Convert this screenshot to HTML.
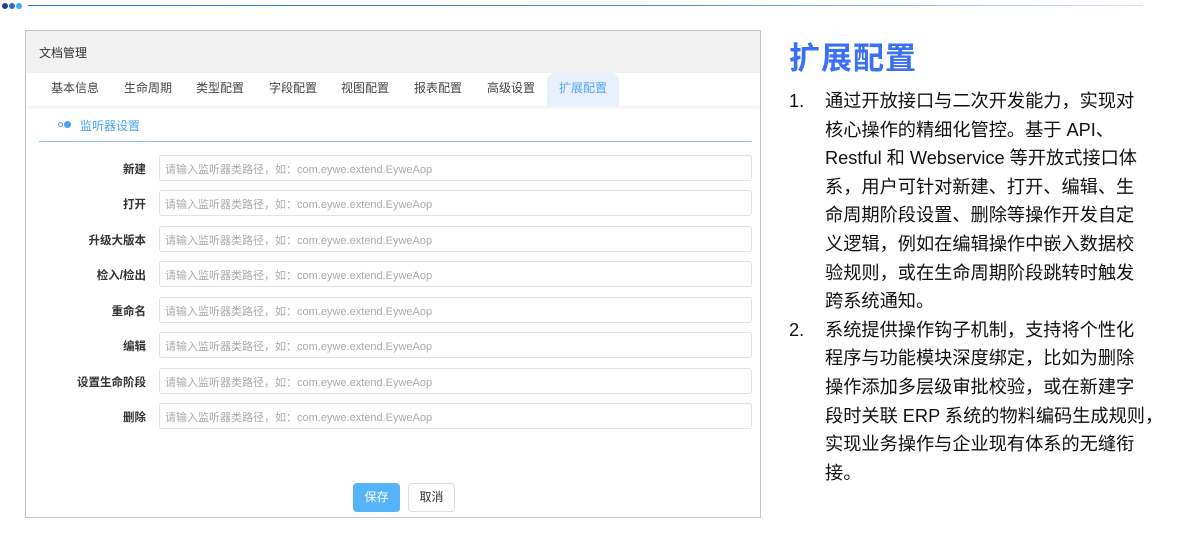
<!DOCTYPE html>
<html><head><meta charset="utf-8"><style>
*{margin:0;padding:0;box-sizing:border-box}
body{width:1188px;height:535px;background:#fff;position:relative;overflow:hidden;font-family:"Liberation Sans","Noto Sans CJK SC",sans-serif}
.dot{position:absolute;top:3px;width:6px;height:6px;border-radius:50%}
.topline{position:absolute;left:28px;top:5px;width:1115px;height:1px;background:linear-gradient(90deg,#2a6fd0,#5a8fe0 60%,#d8e4f6)}
.panel{position:absolute;left:25px;top:30px;width:736px;height:488px;border:1px solid #c4c4c4;background:#fff}
.hdr{height:42px;background:#f1f1f1;font-size:12px;color:#333;padding:13px 0 0 13px}
.tabs{height:33px;position:relative;box-shadow:0 2px 3px rgba(0,0,0,.06)}
.tab{position:absolute;top:0;height:33px;line-height:31px;font-size:12px;color:#444;text-align:center}
.tab.act{background:#e8f0fd;color:#54a6f2;border-radius:8px 8px 0 0}
.sec{position:absolute;top:86px;font-size:12px;color:#4aa3f0}
.sline{position:absolute;left:13px;top:110px;width:713px;height:1px;background:#8cc3f0}
.lbl{position:absolute;width:120px;left:0;text-align:right;font-size:11.5px;font-weight:bold;color:#333}
.inp{position:absolute;left:133px;width:593px;height:26px;border:1px solid #e3e3e3;border-radius:3px;font-size:11px;color:#aaa;padding:5px 0 0 5px}
.btn{position:absolute;top:452px;height:29px;width:47px;border-radius:4px;font-size:12px;text-align:center;line-height:29px}
h1{position:absolute;left:789px;top:33px;font-size:31px;font-weight:bold;color:#3a70f2;letter-spacing:1px}
ol{position:absolute;left:789px;top:87px;width:400px;list-style:none;font-size:18.2px;line-height:28.6px;color:#111;white-space:nowrap}
li{position:relative;padding-left:36px}
li span{position:absolute;left:0}
</style></head><body>
<div class="dot" style="left:2px;background:#1d3f9a"></div>
<div class="dot" style="left:9px;background:#2a6fd0"></div>
<div class="dot" style="left:16px;background:#38b0ee"></div>
<div class="topline"></div>
<div class="panel">
<div class="hdr">文档管理</div>
<div class="tabs">
<div class="tab" style="left:13px;width:72px">基本信息</div>
<div class="tab" style="left:86px;width:72px">生命周期</div>
<div class="tab" style="left:158px;width:72px">类型配置</div>
<div class="tab" style="left:231px;width:72px">字段配置</div>
<div class="tab" style="left:303px;width:72px">视图配置</div>
<div class="tab" style="left:376px;width:72px">报表配置</div>
<div class="tab" style="left:449px;width:72px">高级设置</div>
<div class="tab act" style="left:521px;width:72px">扩展配置</div>
</div>
<div style="position:absolute;left:32px;top:91px;width:5px;height:5px;border:1px solid #4aa3f0;border-radius:50%"></div>
<div style="position:absolute;left:38px;top:90px;width:7px;height:7px;background:#4aa3f0;border-radius:50%"></div>
<div class="sec" style="left:54px">监听器设置</div>
<div class="sline"></div>
<div class="lbl" style="top:130px">新建</div><div class="inp" style="top:124px">请输入监听器类路径，如：com.eywe.extend.EyweAop</div>
<div class="lbl" style="top:165px">打开</div><div class="inp" style="top:159px">请输入监听器类路径，如：com.eywe.extend.EyweAop</div>
<div class="lbl" style="top:201px">升级大版本</div><div class="inp" style="top:195px">请输入监听器类路径，如：com.eywe.extend.EyweAop</div>
<div class="lbl" style="top:236px">检入/检出</div><div class="inp" style="top:230px">请输入监听器类路径，如：com.eywe.extend.EyweAop</div>
<div class="lbl" style="top:272px">重命名</div><div class="inp" style="top:266px">请输入监听器类路径，如：com.eywe.extend.EyweAop</div>
<div class="lbl" style="top:307px">编辑</div><div class="inp" style="top:301px">请输入监听器类路径，如：com.eywe.extend.EyweAop</div>
<div class="lbl" style="top:343px">设置生命阶段</div><div class="inp" style="top:337px">请输入监听器类路径，如：com.eywe.extend.EyweAop</div>
<div class="lbl" style="top:378px">删除</div><div class="inp" style="top:372px">请输入监听器类路径，如：com.eywe.extend.EyweAop</div>
<div class="btn" style="left:327px;background:#55b4f9;color:#fff">保存</div>
<div class="btn" style="left:382px;border:1px solid #ddd;color:#333;line-height:27px">取消</div>
</div>
<h1>扩展配置</h1>
<ol>
<li><span>1.</span>通过开放接口与二次开发能力，实现对<br>核心操作的精细化管控。基于 API、<br>Restful 和 Webservice 等开放式接口体<br>系，用户可针对新建、打开、编辑、生<br>命周期阶段设置、删除等操作开发自定<br>义逻辑，例如在编辑操作中嵌入数据校<br>验规则，或在生命周期阶段跳转时触发<br>跨系统通知。</li>
<li><span>2.</span>系统提供操作钩子机制，支持将个性化<br>程序与功能模块深度绑定，比如为删除<br>操作添加多层级审批校验，或在新建字<br>段时关联 ERP 系统的物料编码生成规则，<br>实现业务操作与企业现有体系的无缝衔<br>接。</li>
</ol>
</body></html>
